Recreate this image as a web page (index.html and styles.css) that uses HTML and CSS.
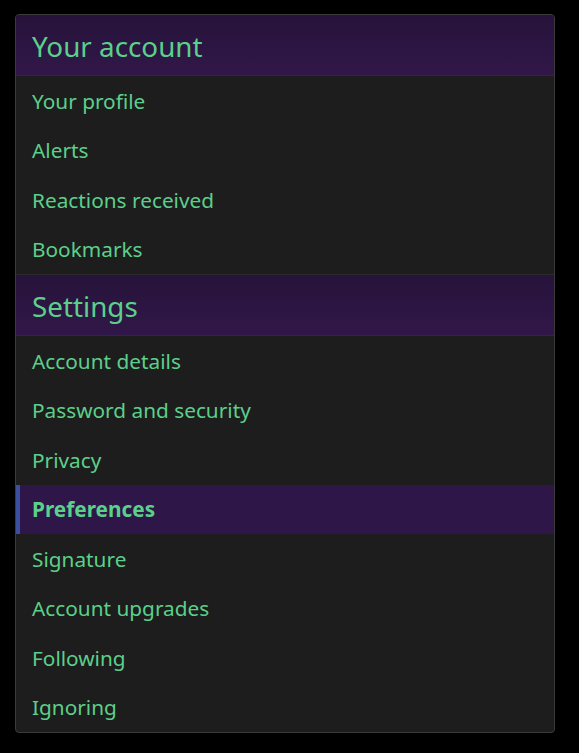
FILE: index.html
```html
<!DOCTYPE html>
<html lang="en">
<head>
<meta charset="utf-8">
<title>Account</title>
<link rel="stylesheet" href="styles.css">
</head>
<body>
<nav class="panel">
  <h3 class="panel-header">Your account</h3>
  <ul class="menu">
    <li class="menu-item">Your profile</li>
    <li class="menu-item">Alerts</li>
    <li class="menu-item">Reactions received</li>
    <li class="menu-item">Bookmarks</li>
  </ul>
  <h3 class="panel-header">Settings</h3>
  <ul class="menu">
    <li class="menu-item">Account details</li>
    <li class="menu-item">Password and security</li>
    <li class="menu-item">Privacy</li>
    <li class="menu-item is-selected">Preferences</li>
    <li class="menu-item">Signature</li>
    <li class="menu-item">Account upgrades</li>
    <li class="menu-item">Following</li>
    <li class="menu-item">Ignoring</li>
  </ul>
</nav>
</body>
</html>
```

FILE: styles.css
```css
html, body {
  margin: 0;
  padding: 0;
  background: #000;
}
body {
  padding: 14px 24px 0 15px;
  font-family: "Noto Sans", "Open Sans", sans-serif;
}
.panel {
  width: 538px;
  border: 1px solid #3a3a3a;
  border-radius: 4px;
  background: #1d1d1d;
  overflow: hidden;
}
.panel-header {
  margin: 0;
  height: 60px;
  box-sizing: border-box;
  display: flex;
  align-items: center;
  padding: 2px 16px 0;
  font-size: 27.8px;
  font-weight: 400;
  color: #5bd08a;
  background: linear-gradient(to bottom, #26133a, #311749);
  border-bottom: 1px solid #2c2c2c;
}
.panel > .panel-header:first-child {
  height: 61px;
}
.menu + .panel-header {
  border-top: 1px solid #2c2c2c;
  height: 62px;
}
.menu {
  list-style: none;
  margin: 0;
  padding: 0;
}
.menu-item {
  height: 49.5px;
  display: flex;
  align-items: center;
  padding: 0 16px;
  font-size: 20.8px;
  color: #5bd08a;
  box-sizing: border-box;
}
.menu-item.is-selected {
  background: #2f1649;
  font-weight: 700;
  border-left: 4px solid #3a4fa0;
  padding-left: 12px;
}
```
